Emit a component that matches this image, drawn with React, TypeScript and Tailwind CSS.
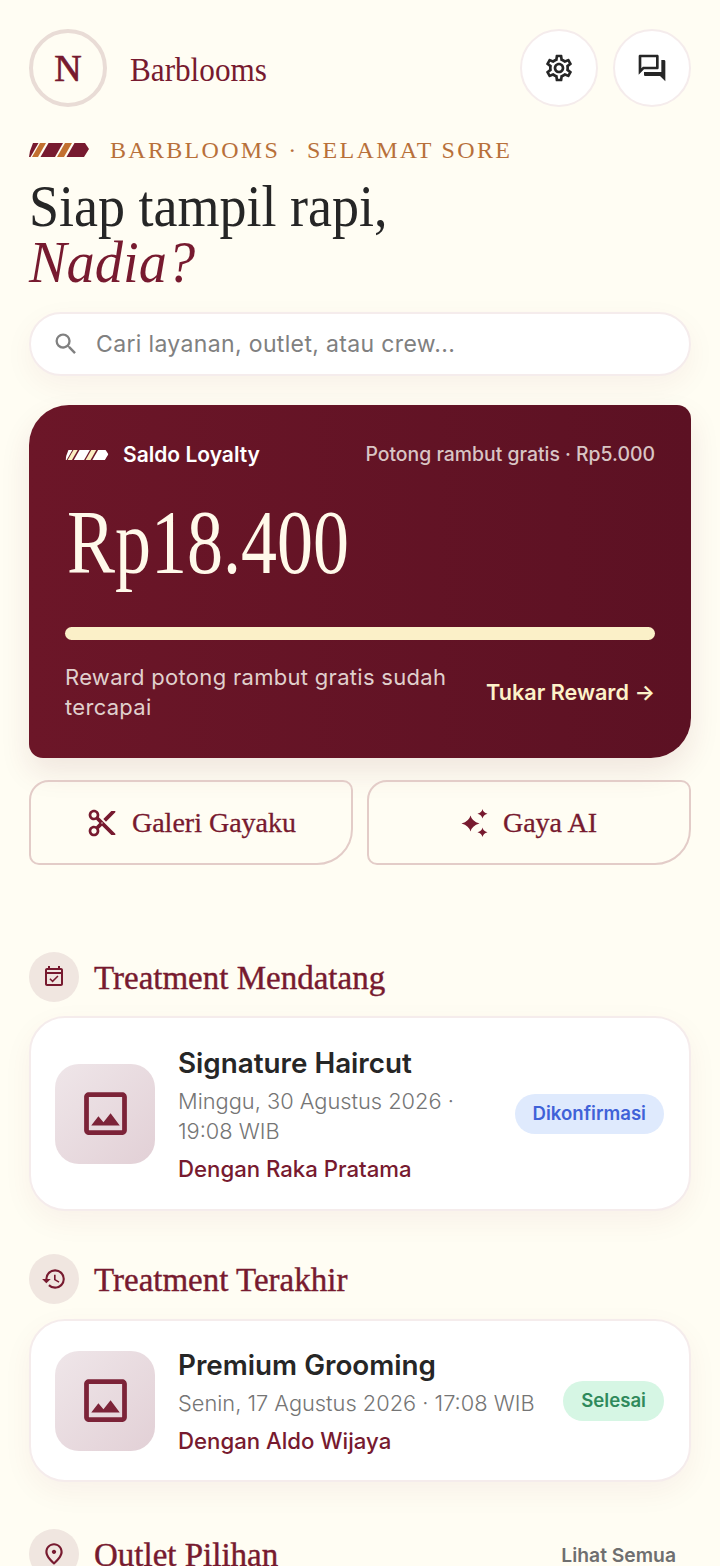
import React from 'react';
import { MdOutlineSettings, MdOutlineForum, MdSearch, MdOutlineEventAvailable, MdHistory, MdOutlineImage, MdOutlinePlace, MdContentCut } from 'react-icons/md';

const serif = "font-['Liberation_Serif',serif]";

// slanted bars, x given at mid height of a 60x14 box
function Stripes({ id, a, b, w, h }: { id: string; a: string; b: string; w: number; h: number }) {
  const bars: [number, number, string][] = [
    [-2, 5.5, a],
    [7, 13, b],
    [15.5, 30, a],
    [32, 39, b],
    [41.5, 60, a],
  ];
  return (
    <svg width={w} height={h} viewBox="0 0 60 14" className="shrink-0">
      <defs>
        <clipPath id={id}>
          <polygon points="4,0 56,0 60,6 55,14 0,14 1,8" />
        </clipPath>
      </defs>
      <g clipPath={`url(#${id})`}>
        {bars.map(([from, to, fill], i) => (
          <polygon key={i} points={`${from - 4},14 ${from + 4},0 ${to + 4},0 ${to - 4},14`} fill={fill} />
        ))}
      </g>
    </svg>
  );
}

function Sparkle({ size }: { size: number }) {
  return (
    <svg width={size} height={size} viewBox="0 0 28 28" fill="currentColor">
      <path d="M9.5 6.5 Q10.8 12.2 18.5 14.5 Q10.8 16.8 9.5 22.5 Q8.2 16.8 0.5 14.5 Q8.2 12.2 9.5 6.5 Z" />
      <path d="M21.5 0 Q22.2 3.6 26.5 4.8 Q22.2 6 21.5 9.6 Q20.8 6 16.5 4.8 Q20.8 3.6 21.5 0 Z" />
      <path d="M21.5 18.4 Q22.2 22 26.5 23.2 Q22.2 24.4 21.5 28 Q20.8 24.4 16.5 23.2 Q20.8 22 21.5 18.4 Z" />
    </svg>
  );
}

function SectionTitle({ icon, title, action }: { icon: React.ReactNode; title: string; action?: string }) {
  return (
    <div className="flex items-center gap-[15px] h-[50px]">
      <div className="w-[50px] h-[50px] rounded-full bg-[#f0e6e0] flex items-center justify-center text-[#771a2f] shrink-0">{icon}</div>
      <h2 className={`${serif} text-[33px] leading-[50px] pt-[2px] text-[#771a2f] [-webkit-text-stroke:0.4px_#771a2f] flex-1`}>{title}</h2>
      {action && <span className="text-[19.3px] font-semibold text-[#6f6f6f] pr-[15px] pt-[2px]">{action}</span>}
    </div>
  );
}

interface TreatmentProps {
  title: string;
  date: React.ReactNode;
  crew: string;
  status: string;
  statusClass: string;
  cardClass: string;
}

function TreatmentCard({ title, date, crew, status, statusClass, cardClass }: TreatmentProps) {
  return (
    <div className={`bg-white border-2 border-[#f5ecec] rounded-[36px] shadow-[0_10px_30px_rgba(112,26,46,0.05)] flex items-center pl-[24px] pr-[25px] ${cardClass}`}>
      <div className="w-[100px] h-[100px] rounded-[24px] bg-gradient-to-br from-[#efe6e9] to-[#e2d0d6] flex items-center justify-center text-[#7c2338] shrink-0">
        <MdOutlineImage size={57} />
      </div>
      <div className="flex-1 min-w-0 pl-[23px] pt-[2px]">
        <h3 className="text-[27.8px] leading-[36px] font-semibold text-[#262626]">{title}</h3>
        <p className="text-[21.8px] leading-[30px] font-light text-[#757575] mt-[5px]">{date}</p>
        <p className="text-[22.2px] leading-[30px] font-medium text-[#771a2f] mt-[8px]">{crew}</p>
      </div>
      <span className={`rounded-full h-[40px] px-[18px] flex items-center text-[18.6px] font-semibold shrink-0 ${statusClass}`}>{status}</span>
    </div>
  );
}

export default function App() {
  return (
    <div className="h-[1566px] overflow-hidden bg-[#fffdf3] font-['Inter',sans-serif] px-[29px] pt-[29px]">
      {/* Header */}
      <header className="flex items-center justify-between h-[78px]">
        <div className="flex items-center gap-[23px]">
          <div className="w-[78px] h-[78px] rounded-full border-[4px] border-[#e9dcd6] flex items-center justify-center">
            <span className={`${serif} text-[38px] text-[#771a2f] [-webkit-text-stroke:0.7px_#771a2f]`}>N</span>
          </div>
          <span className={`${serif} block text-[33px] pt-[5px] text-[#771a2f] origin-left scale-x-[0.945]`}>Barblooms</span>
        </div>
        <div className="flex gap-[15px]">
          <button className="w-[78px] h-[78px] rounded-full bg-white border-2 border-[#f5ecec] flex items-center justify-center text-[#262626]"><MdOutlineSettings size={32} /></button>
          <button className="w-[78px] h-[78px] rounded-full bg-white border-2 border-[#f5ecec] flex items-center justify-center text-[#262626]"><MdOutlineForum size={32} /></button>
        </div>
      </header>

      {/* Greeting */}
      <div className="flex items-center gap-[21px] mt-[29px] h-[28px]">
        <Stripes id="stripe-top" a="#771a2f" b="#c2702f" w={60} h={14} />
        <span className={`${serif} text-[24px] tracking-[2.3px] text-[#b8703a]`}>BARBLOOMS · SELAMAT SORE</span>
      </div>
      <h1 className={`${serif} text-[60px] leading-[56px] text-[#262626] mt-[14px]`}>
        <span className="block origin-left scale-x-[0.9]">Siap tampil rapi,</span>
        <em className="block origin-left scale-x-[0.94] text-[#771a2f]">Nadia?</em>
      </h1>

      {/* Search */}
      <div className="mt-[22px] h-[64px] rounded-full bg-white border-2 border-[#f5ecec] shadow-[0_10px_30px_rgba(112,26,46,0.05)] flex items-center pl-[21px] text-[#808080]">
        <MdSearch size={28} />
        <span className="ml-[16px] text-[23px] tracking-[0.35px]">Cari layanan, outlet, atau crew...</span>
      </div>

      {/* Loyalty */}
      <section className="mt-[29px] h-[353px] rounded-tl-[40px] rounded-tr-[14px] rounded-br-[40px] rounded-bl-[14px] bg-gradient-to-r from-[#6c1628] to-[#5c1123] shadow-[0_14px_30px_rgba(112,26,46,0.1)] px-[36px] pt-[36px]">
        <div className="flex items-center h-[28px]">
          <Stripes id="stripe-card" a="#ffffff" b="#fbeec2" w={44} h={10} />
          <span className="ml-[14px] text-[21px] font-semibold text-white">Saldo Loyalty</span>
          <span className="ml-auto text-[19.4px] font-medium text-[#d9c5c4]">Potong rambut gratis · Rp5.000</span>
        </div>
        <div className={`${serif} text-[90px] leading-[100px] text-[#fff9ea] mt-[24px] ml-[2px] origin-left scale-x-[0.8]`}>Rp18.400</div>
        <div className="mt-[34px] h-[13px] rounded-full bg-[#fbf0c8]" />
        <div className="flex items-center justify-between mt-[22px]">
          <p className="text-[22px] leading-[30px] tracking-[0.3px] text-[#e0d0cd] w-[400px]">Reward potong rambut gratis sudah tercapai</p>
          <span className="text-[21.6px] font-semibold text-[#fdf2c9]">Tukar Reward →</span>
        </div>
      </section>

      {/* Quick actions */}
      <div className="grid grid-cols-2 gap-[14px] mt-[22px]">
        <button className="h-[85px] rounded-tl-[20px] rounded-tr-[10px] rounded-br-[36px] rounded-bl-[10px] border-2 border-[#e3ccc8] flex items-center justify-center gap-[14px] text-[#771a2f]">
          <MdContentCut size={32} />
          <span className={`${serif} text-[28px] [-webkit-text-stroke:0.3px_#771a2f]`}>Galeri Gayaku</span>
        </button>
        <button className="h-[85px] rounded-tl-[20px] rounded-tr-[10px] rounded-br-[36px] rounded-bl-[10px] border-2 border-[#e3ccc8] flex items-center justify-center gap-[14px] text-[#771a2f]">
          <Sparkle size={28} />
          <span className={`${serif} text-[28px] [-webkit-text-stroke:0.3px_#771a2f]`}>Gaya AI</span>
        </button>
      </div>

      {/* Treatments */}
      <div className="mt-[87px]">
        <SectionTitle icon={<MdOutlineEventAvailable size={24} />} title="Treatment Mendatang" />
        <div className="mt-[14px]">
          <TreatmentCard
            cardClass="h-[195px]"
            title="Signature Haircut"
            date={<>Minggu, 30 Agustus 2026 · 19:08 WIB</>}
            crew="Dengan Raka Pratama"
            status="Dikonfirmasi"
            statusClass="bg-[#dfeafd] text-[#3f62d8]"
          />
        </div>
      </div>
      <div className="mt-[43px]">
        <SectionTitle icon={<MdHistory size={26} />} title="Treatment Terakhir" />
        <div className="mt-[15px]">
          <TreatmentCard
            cardClass="h-[163px]"
            title="Premium Grooming"
            date="Senin, 17 Agustus 2026 · 17:08 WIB"
            crew="Dengan Aldo Wijaya"
            status="Selesai"
            statusClass="bg-[#d6f6e4] text-[#2f8a5c]"
          />
        </div>
      </div>
      <div className="mt-[47px]">
        <SectionTitle icon={<MdOutlinePlace size={26} />} title="Outlet Pilihan" action="Lihat Semua" />
      </div>
    </div>
  );
}
